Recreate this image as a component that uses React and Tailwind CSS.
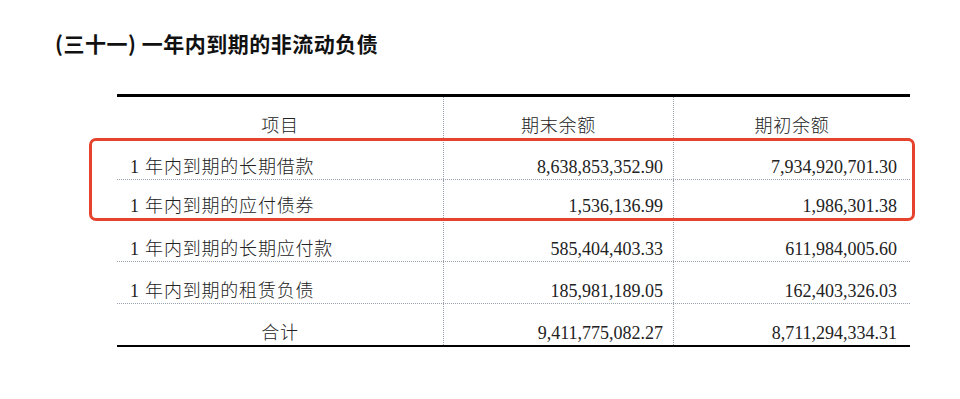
import React from "react";

const rows = [
  { name: "1 年内到期的长期借款", a: "8,638,853,352.90", b: "7,934,920,701.30", h: "h-[41px]" },
  { name: "1 年内到期的应付债券", a: "1,536,136.99", b: "1,986,301.38", h: "h-[39px]" },
  { name: "1 年内到期的长期应付款", a: "585,404,403.33", b: "611,984,005.60", h: "h-[43px]" },
  { name: "1 年内到期的租赁负债", a: "185,981,189.05", b: "162,403,326.03", h: "h-[42px]" },
];

const serif = "font-['Liberation_Serif','Noto_Sans_CJK_SC',serif]";

export default function App() {
  return (
    <div className="relative w-[960px] h-[399px] bg-white overflow-hidden">
      <div className="pl-[55px] pt-[30px] h-[94px]">
        <h1 className="text-[21px] leading-[26px] font-bold text-[#111] font-['Noto_Sans_CJK_SC',sans-serif] tracking-[0.5px]">
          (三十一) 一年内到期的非流动负债
        </h1>
      </div>
      <div className={`ml-[117px] w-[793px] border-t-[3px] border-black border-b-[2px] text-[18px] text-[#222] ${serif}`}>
        <div className="grid grid-cols-[326px_230px_237px] h-[42px] border-b border-dotted border-gray-400">
          <div className="flex items-end justify-center leading-[24px] font-light tracking-[0.8px]">项目</div>
          <div className="flex items-end justify-center leading-[24px] border-l border-dotted border-gray-400 font-light tracking-[0.8px]">期末余额</div>
          <div className="flex items-end justify-center leading-[24px] border-l border-dotted border-gray-400 font-light tracking-[0.8px]">期初余额</div>
        </div>
        {rows.map((r) => (
          <div key={r.name} className={`grid grid-cols-[326px_230px_237px] ${r.h} border-b border-dotted border-gray-400`}>
            <div className="flex items-end pl-[13px] leading-[24px] font-light tracking-[0.8px]">{r.name}</div>
            <div className="flex items-end justify-end pr-[10px] leading-[24px] border-l border-dotted border-gray-400">{r.a}</div>
            <div className="flex items-end justify-end pr-[13px] leading-[24px] border-l border-dotted border-gray-400">{r.b}</div>
          </div>
        ))}
        <div className="grid grid-cols-[326px_230px_237px] h-[41px]">
          <div className="flex items-end justify-center leading-[24px] font-light tracking-[0.8px]">合计</div>
          <div className="flex items-end justify-end pr-[10px] leading-[24px] border-l border-dotted border-gray-400">9,411,775,082.27</div>
          <div className="flex items-end justify-end pr-[13px] leading-[24px] border-l border-dotted border-gray-400">8,711,294,334.31</div>
        </div>
      </div>
      <div className="absolute left-[89px] top-[138px] w-[826px] h-[83px] border-[3px] border-[#e5432e] rounded-[7px]" />
    </div>
  );
}
